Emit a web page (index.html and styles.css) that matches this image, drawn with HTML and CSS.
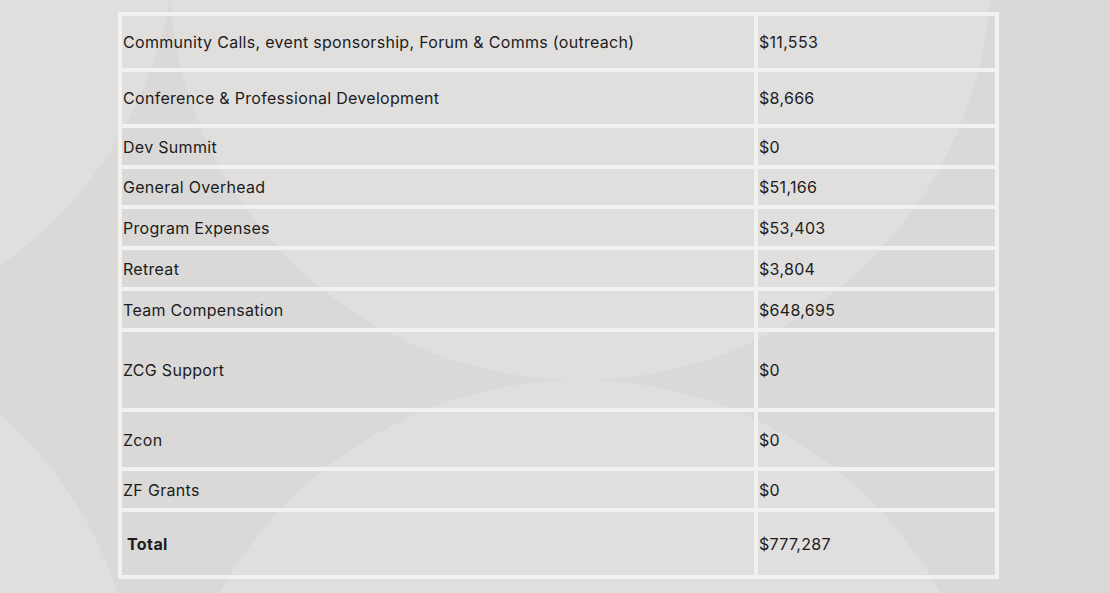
FILE: index.html
```html
<!DOCTYPE html>
<html lang="en">
<head>
<meta charset="utf-8">
<title>Expenses</title>
<link rel="stylesheet" href="styles.css">
</head>
<body>
<main class="page">
  <table class="budget">
    <colgroup>
      <col class="col-label">
      <col class="col-value">
    </colgroup>
    <tbody>
      <tr><td><div class="cell h52">Community Calls, event sponsorship, Forum &amp; Comms (outreach)</div></td><td><div class="cell h52">$11,553</div></td></tr>
      <tr><td><div class="cell h52">Conference &amp; Professional Development</div></td><td><div class="cell h52">$8,666</div></td></tr>
      <tr><td><div class="cell h37">Dev Summit</div></td><td><div class="cell h37">$0</div></td></tr>
      <tr><td><div class="cell h36">General Overhead</div></td><td><div class="cell h36">$51,166</div></td></tr>
      <tr><td><div class="cell h37">Program Expenses</div></td><td><div class="cell h37">$53,403</div></td></tr>
      <tr><td><div class="cell h37">Retreat</div></td><td><div class="cell h37">$3,804</div></td></tr>
      <tr><td><div class="cell h37">Team Compensation</div></td><td><div class="cell h37">$648,695</div></td></tr>
      <tr><td><div class="cell h76">ZCG Support</div></td><td><div class="cell h76">$0</div></td></tr>
      <tr><td><div class="cell h55">Zcon</div></td><td><div class="cell h55">$0</div></td></tr>
      <tr><td><div class="cell h37">ZF Grants</div></td><td><div class="cell h37">$0</div></td></tr>
      <tr class="total"><td><div class="cell h63"><strong class="total-label">Total</strong></div></td><td><div class="cell h63">$777,287</div></td></tr>
    </tbody>
  </table>
</main>
</body>
</html>
```

FILE: styles.css
```css
html {
  background-color: #dad9d8;
  background-image:
    radial-gradient(circle 411px at 580px -31px, #e0dfde 410.5px, rgba(224,223,222,0) 411.5px),
    radial-gradient(circle 411px at 580px 791px, #e0dfde 410.5px, rgba(224,223,222,0) 411.5px),
    radial-gradient(circle 411px at -235px -72px, #e0dfde 410.5px, rgba(224,223,222,0) 411.5px),
    radial-gradient(circle 411px at -273px 721px, #e0dfde 410.5px, rgba(224,223,222,0) 411.5px);
  background-repeat: no-repeat;
  min-height: 100%;
}

body {
  margin: 0;
  font-family: "Inter", "Noto Sans", sans-serif;
  font-size: 16px;
  letter-spacing: 0.3px;
  color: #1c1c1c;
}

.page {
  padding: 12px 0 0 118px;
}

.budget {
  width: 877px;
  border-collapse: collapse;
  table-layout: fixed;
}

.col-label { width: 636px; }
.col-value { width: 241px; }

.budget td {
  padding: 0;
  border: 4px solid #f1f1f0;
  vertical-align: middle;
}

.cell {
  display: flex;
  align-items: center;
  padding-left: 1px;
}

.h36 { height: 36px; }
.h37 { height: 37px; }
.h52 { height: 52px; }
.h55 { height: 55px; }
.h63 { height: 63px; }
.h76 { height: 76px; }

.total-label {
  padding-left: 4px;
  font-weight: 700;
  letter-spacing: 0.4px;
}
```
